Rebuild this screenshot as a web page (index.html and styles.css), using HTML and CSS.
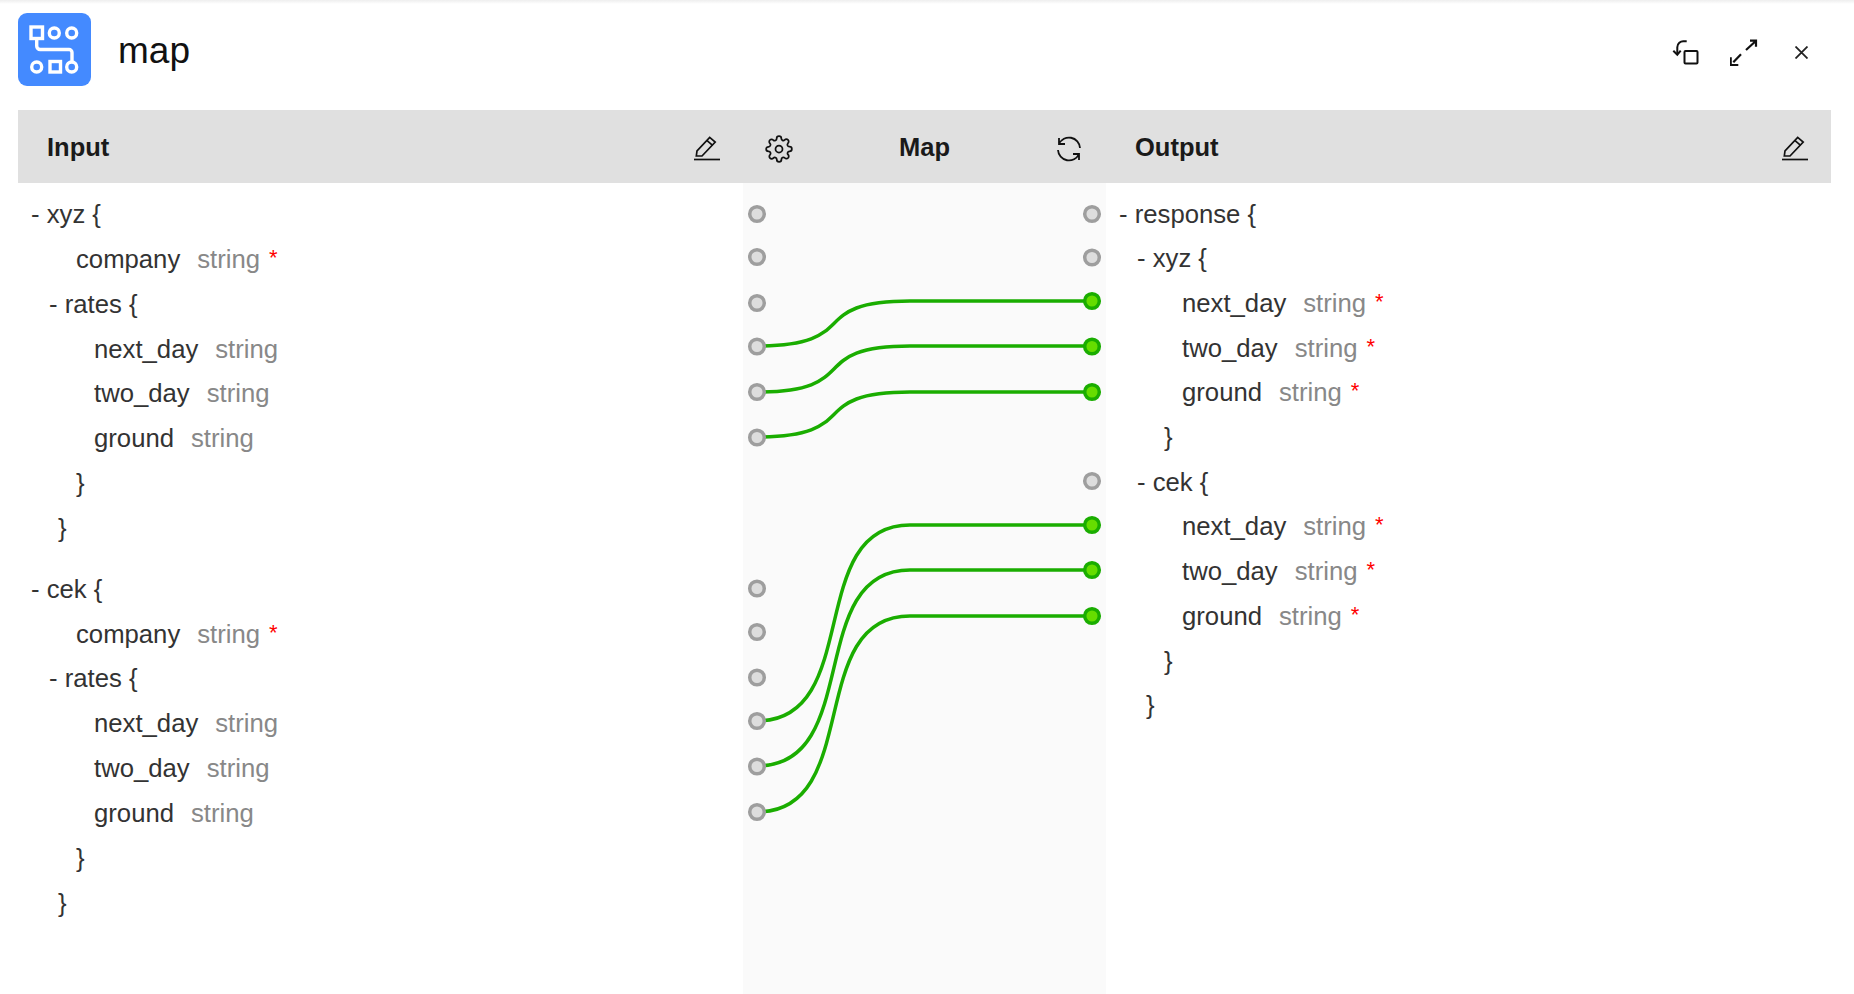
FILE: index.html
```html
<!DOCTYPE html>
<html lang="en">
<head>
  <meta charset="UTF-8">
  <meta name="viewport" content="width=device-width, initial-scale=1.0">
  <title>map</title>
  <link rel="stylesheet" href="styles.css">
</head>
<body>
  <div class="header">
    <svg class="logo" viewBox="0 0 73 73">
      <rect width="73" height="73" rx="9" fill="#448aff"/>
      <g fill="none" stroke="#fff" stroke-width="3.4">
        <rect x="13" y="14" width="11.5" height="11.5"/>
        <circle cx="36.3" cy="20" r="5"/>
        <circle cx="53.7" cy="20" r="5"/>
        <circle cx="18.7" cy="54" r="5"/>
        <rect x="32" y="48.5" width="10.5" height="10.5"/>
        <circle cx="53.7" cy="54" r="5"/>
        <path d="M18.7 25.500V33a3.500 3.500 0 0 0 3.500 3.500H51a3 3 0 0 1 3 3V49"/>
      </g>
    </svg>
    <h1 class="title">map</h1>
    <div class="actions">
      <svg class="act-undo" viewBox="0 0 30 26" fill="none" stroke="#111" stroke-width="2">
        <rect x="12.500" y="12" width="13" height="12.500" rx="1"/>
        <path d="M14.700 2.300H12a6 6 0 0 0-6.700 6V15"/>
        <path d="M1.300 11.700l4 4 3.400-4"/>
      </svg>
      <svg class="act-expand" viewBox="0 0 28 28" fill="none" stroke="#111" stroke-width="2.200">
        <path d="M3.300 24.300L11 16.300M16 12L25 3.700M20 2.700h6v6M0.700 19.300V27h7.600"/>
      </svg>
      <svg class="act-close" viewBox="0 0 13 13" fill="none" stroke="#222" stroke-width="1.800">
        <path d="M0.500 0.500l12 12M12.500 0.500l-12 12"/>
      </svg>
    </div>
  </div>

  <div class="band">
    <div class="band-cell">
      <span class="band-title">Input</span>
      <svg class="icon-edit" viewBox="0 0 26 26" fill="none" stroke="#111" stroke-width="1.700">
        <path d="M2.300 21L3 15.800 15.700 2.300l5.500 4.700L8 21z"/>
        <path d="M12.800 5.300l5.800 5"/>
        <path d="M0 24.500h26"/>
      </svg>
    </div>
    <div class="band-cell band-map">
      <svg class="icon-gear" viewBox="0 0 24 24" fill="none" stroke="#111" stroke-width="1.500">
        <circle cx="12" cy="12" r="3"/>
        <path d="M19.400 15a1.650 1.650 0 0 0 .33 1.820l.06.06a2 2 0 0 1 0 2.830 2 2 0 0 1-2.830 0l-.06-.06a1.650 1.650 0 0 0-1.820-.33 1.650 1.650 0 0 0-1 1.510V21a2 2 0 0 1-2 2 2 2 0 0 1-2-2v-.09A1.650 1.650 0 0 0 9 19.400a1.650 1.650 0 0 0-1.820.33l-.06.06a2 2 0 0 1-2.830 0 2 2 0 0 1 0-2.830l.06-.06a1.650 1.650 0 0 0 .33-1.820 1.650 1.650 0 0 0-1.510-1H3a2 2 0 0 1-2-2 2 2 0 0 1 2-2h.09A1.650 1.650 0 0 0 4.600 9a1.650 1.650 0 0 0-.33-1.820l-.06-.06a2 2 0 0 1 0-2.830 2 2 0 0 1 2.830 0l.06.06a1.650 1.650 0 0 0 1.820.33H9a1.650 1.650 0 0 0 1-1.510V3a2 2 0 0 1 2-2 2 2 0 0 1 2 2v.09a1.650 1.650 0 0 0 1 1.510 1.650 1.650 0 0 0 1.820-.33l.06-.06a2 2 0 0 1 2.830 0 2 2 0 0 1 0 2.830l-.06.06a1.650 1.650 0 0 0-.33 1.820V9a1.650 1.650 0 0 0 1.510 1H21a2 2 0 0 1 2 2 2 2 0 0 1-2 2h-.09a1.650 1.650 0 0 0-1.510 1z"/>
      </svg>
      <span class="band-title">Map</span>
      <svg class="icon-refresh" viewBox="0 0 26 26" fill="none" stroke="#111" stroke-width="1.800">
        <path d="M3 8A11 11 0 0 1 24 12M3 2v6h6"/>
        <path d="M23 18A11 11 0 0 1 2 14M23 24v-6h-6"/>
      </svg>
    </div>
    <div class="band-cell band-output">
      <span class="band-title">Output</span>
      <svg class="icon-edit" viewBox="0 0 26 26" fill="none" stroke="#111" stroke-width="1.700">
        <path d="M2.300 21L3 15.800 15.700 2.300l5.500 4.700L8 21z"/>
        <path d="M12.800 5.300l5.800 5"/>
        <path d="M0 24.500h26"/>
      </svg>
    </div>
  </div>

  <div class="columns">
    <div class="schema">
      <div class="row lvl0">- xyz {</div>
      <div class="row lvl2"><span class="name">company</span><span class="type">string</span><span class="req">*</span></div>
      <div class="row lvl1">- rates {</div>
      <div class="row lvl3"><span class="name">next_day</span><span class="type">string</span></div>
      <div class="row lvl3"><span class="name">two_day</span><span class="type">string</span></div>
      <div class="row lvl3"><span class="name">ground</span><span class="type">string</span></div>
      <div class="row brace2">}</div>
      <div class="row brace1">}</div>

      <div class="row lvl0 block-start">- cek {</div>
      <div class="row lvl2"><span class="name">company</span><span class="type">string</span><span class="req">*</span></div>
      <div class="row lvl1">- rates {</div>
      <div class="row lvl3"><span class="name">next_day</span><span class="type">string</span></div>
      <div class="row lvl3"><span class="name">two_day</span><span class="type">string</span></div>
      <div class="row lvl3"><span class="name">ground</span><span class="type">string</span></div>
      <div class="row brace2">}</div>
      <div class="row brace1">}</div>
    </div>

    <div class="map-col">
      <!-- viewBox uses page coordinates -->
      <svg class="map-canvas" viewBox="743 183 363 811">
        <g fill="none" stroke="#1aad00" stroke-width="3.500">
          <path d="M757 346C864 346 804 301 910 301H1092"/>
          <path d="M757 392C864 392 804 346 910 346H1092"/>
          <path d="M757 437C864 437 804 392 910 392H1092"/>
          <path d="M757 721C864 721 804 525 910 525H1092"/>
          <path d="M757 766C864 766 804 570 910 570H1092"/>
          <path d="M757 812C864 812 804 616 910 616H1092"/>
        </g>
        <g fill="#ddd" stroke="#9e9e9e" stroke-width="3.500">
          <circle cx="757" cy="214" r="7.300"/>
          <circle cx="757" cy="257" r="7.300"/>
          <circle cx="757" cy="303" r="7.300"/>
          <circle cx="757" cy="346.500" r="7.300"/>
          <circle cx="757" cy="392" r="7.300"/>
          <circle cx="757" cy="437.500" r="7.300"/>
          <circle cx="757" cy="588.500" r="7.300"/>
          <circle cx="757" cy="632" r="7.300"/>
          <circle cx="757" cy="677.500" r="7.300"/>
          <circle cx="757" cy="721" r="7.300"/>
          <circle cx="757" cy="766.500" r="7.300"/>
          <circle cx="757" cy="812" r="7.300"/>
          <circle cx="1092" cy="214" r="7.300"/>
          <circle cx="1092" cy="257.500" r="7.300"/>
          <circle cx="1092" cy="481" r="7.300"/>
        </g>
        <g fill="#66dd00" stroke="#1aad00" stroke-width="3.500">
          <circle cx="1092" cy="301" r="7.300"/>
          <circle cx="1092" cy="346.500" r="7.300"/>
          <circle cx="1092" cy="392" r="7.300"/>
          <circle cx="1092" cy="525" r="7.300"/>
          <circle cx="1092" cy="570" r="7.300"/>
          <circle cx="1092" cy="616" r="7.300"/>
        </g>
      </svg>
    </div>

    <div class="schema schema-out">
      <div class="row lvl0">- response {</div>
      <div class="row lvl1">- xyz {</div>
      <div class="row lvl3"><span class="name">next_day</span><span class="type">string</span><span class="req">*</span></div>
      <div class="row lvl3"><span class="name">two_day</span><span class="type">string</span><span class="req">*</span></div>
      <div class="row lvl3"><span class="name">ground</span><span class="type">string</span><span class="req">*</span></div>
      <div class="row brace2">}</div>
      <div class="row lvl1">- cek {</div>
      <div class="row lvl3"><span class="name">next_day</span><span class="type">string</span><span class="req">*</span></div>
      <div class="row lvl3"><span class="name">two_day</span><span class="type">string</span><span class="req">*</span></div>
      <div class="row lvl3"><span class="name">ground</span><span class="type">string</span><span class="req">*</span></div>
      <div class="row brace2">}</div>
      <div class="row brace1">}</div>
    </div>
  </div>
</body>
</html>
```

FILE: styles.css
```css
html, body {
  height: 100%;
}
body {
  margin: 0;
  font-family: "Liberation Sans", Arial, sans-serif;
  background: linear-gradient(#eee, #fff 4px);
  color: #333;
  overflow: hidden;
}
svg {
  display: block;
  flex: none;
}

.header {
  display: flex;
  align-items: center;
  padding: 13px 46px 24px 18px;
}
.logo {
  width: 73px;
  height: 73px;
}
.title {
  margin: 2px 0 0 27px;
  font-size: 37px;
  font-weight: normal;
  color: #111;
}
.actions {
  margin-left: auto;
  margin-top: 5px;
  display: flex;
  align-items: center;
}
.act-undo {
  width: 30px;
  height: 26px;
}
.act-expand {
  width: 28px;
  height: 28px;
  margin-left: 28px;
}
.act-close {
  width: 13px;
  height: 13px;
  margin-left: 37px;
}

.band {
  display: grid;
  grid-template-columns: 725px 363px 725px;
  height: 73px;
  margin: 0 23px 0 18px;
  background-color: #e0e0e0;
}
.band-cell {
  display: flex;
  align-items: center;
  justify-content: space-between;
  padding: 2px 23px 0 29px;
}
.band-map {
  padding: 2px 24px 0 22px;
}
.band-title {
  font-size: 25.500px;
  font-weight: bold;
  color: #1a1a1a;
}
.icon-edit {
  width: 26px;
  height: 26px;
}
.icon-gear {
  width: 28px;
  height: 28px;
  margin-top: 2px;
}
.icon-refresh {
  width: 26px;
  height: 26px;
  margin-top: 2px;
}

.columns {
  display: grid;
  grid-template-columns: 725px 363px 725px;
  height: 811px;
  margin: 0 23px 0 18px;
}
.schema {
  padding-top: 9px;
}
.schema-out {
  padding-top: 8.500px;
}
.schema-out .row {
  line-height: 44.700px;
}
.row {
  font-size: 25.700px;
  line-height: 44.850px;
  white-space: nowrap;
}
.lvl0 {
  padding-left: 13px;
}
.lvl1 {
  padding-left: 31px;
}
.lvl2 {
  padding-left: 58px;
}
.lvl3 {
  padding-left: 76px;
}
.brace1 {
  padding-left: 40px;
}
.brace2 {
  padding-left: 58px;
}
.block-start {
  margin-top: 16px;
}
.name {
  margin-right: 17px;
}
.type {
  color: #888;
}
.req {
  margin-left: 9px;
  font-size: 22px;
  line-height: 1;
  vertical-align: 3px;
  color: #f00;
}

.map-col {
  background-color: #fafafa;
}
.map-canvas {
  width: 363px;
  height: 811px;
}
```
